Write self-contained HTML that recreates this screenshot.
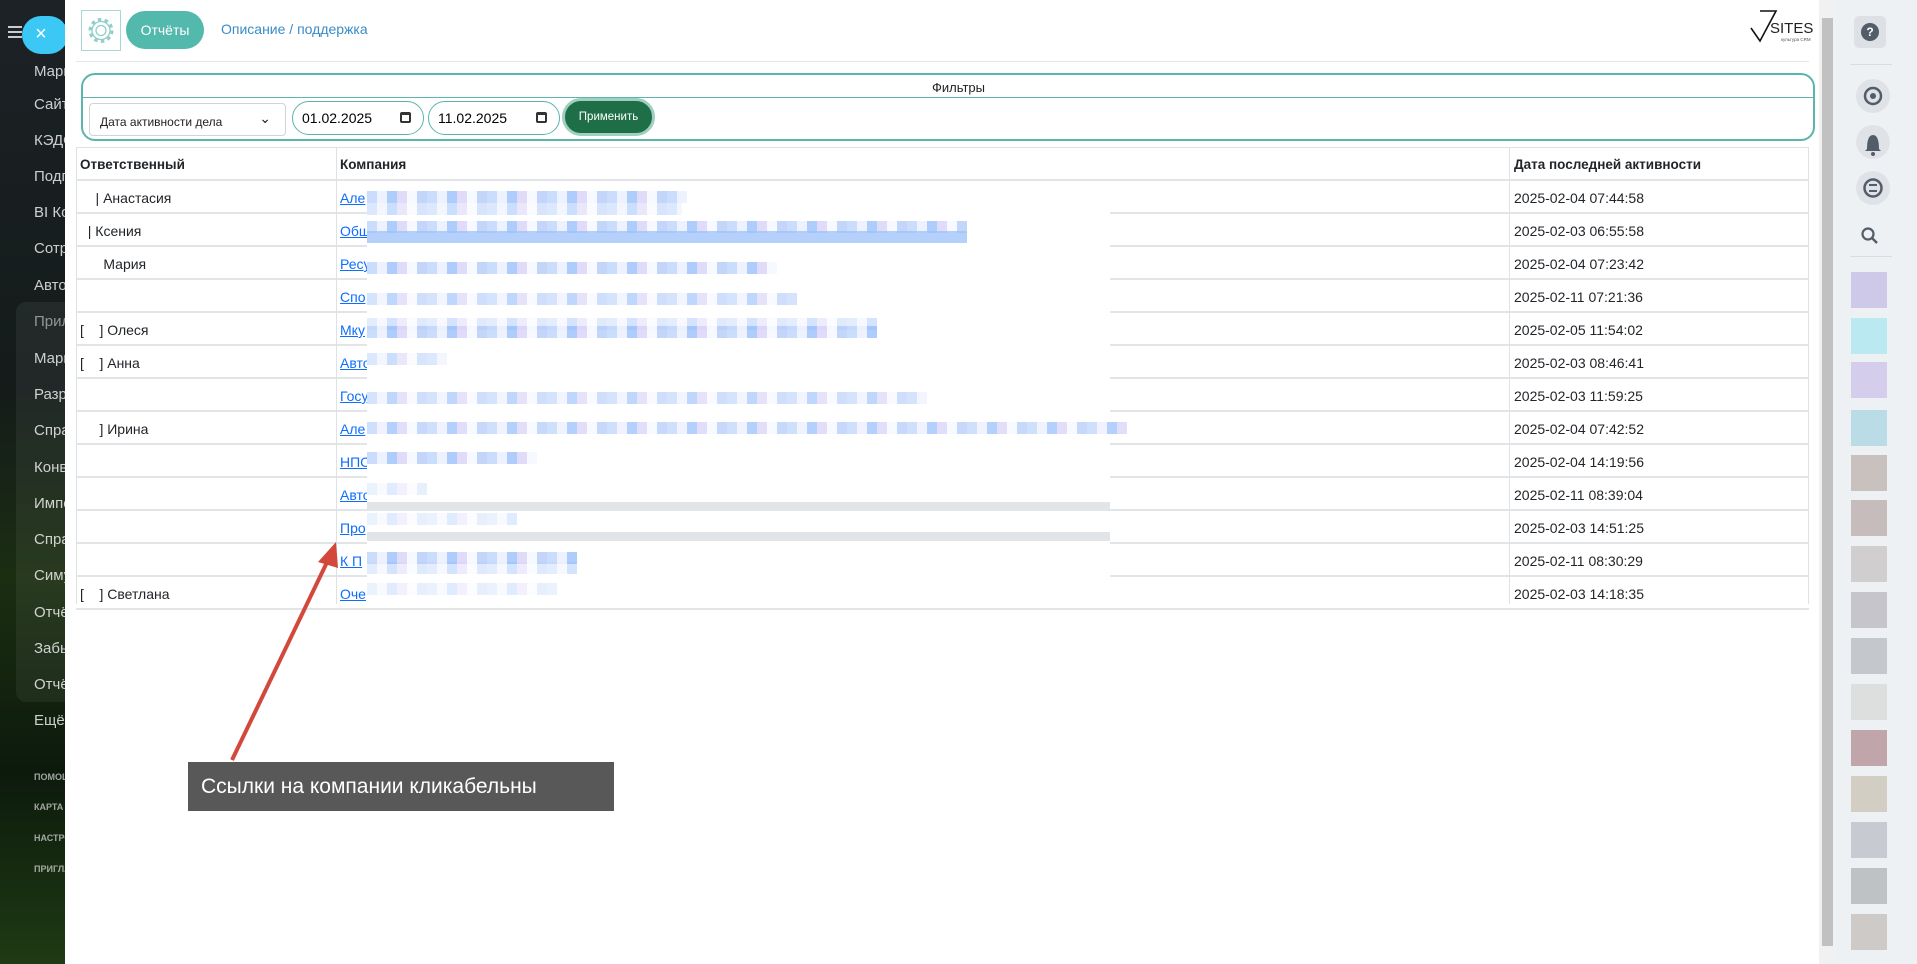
<!DOCTYPE html>
<html><head><meta charset="utf-8"><style>
*{box-sizing:border-box;margin:0;padding:0}
body{width:1917px;height:964px;overflow:hidden;position:relative;font-family:"Liberation Sans","Noto Sans CJK JP",sans-serif;background:#fff}
.sb{position:absolute;left:0;top:0;width:65px;height:964px;background:linear-gradient(180deg,#1c2226 0%,#141b1a 40%,#1b2e12 60%,#0c1a0c 80%,#1f3a14 100%);overflow:hidden}
.sb div{position:absolute;left:34px;color:rgba(255,255,255,.78);font-size:15px;white-space:nowrap}
.sb .sm{font-size:9px;font-weight:bold;color:rgba(255,255,255,.6)}
.abs{position:absolute}
.main{position:absolute;left:65px;top:0;width:1754px;height:964px;background:#fff}
.row{position:absolute;left:76px;width:1733px;height:33px;border-bottom:2px solid #e2e5e8;font-size:14px;color:#212529}
.row span{position:absolute;top:9px}
.c2{left:264px;color:#0d6efd;text-decoration:underline}
.c3{left:1438px}
.vl{position:absolute;top:148px;height:456px;width:1px;background:#dee2e6}
.blur{position:absolute;left:367px;height:12px;opacity:.75;background:repeating-linear-gradient(90deg,#b9d2fb 0 10px,#e9eefd 10px 20px,#94bcfb 20px 30px,#d6cff7 30px 40px,#f3f7ff 40px 50px,#afc9f9 50px 60px)}
.rp{position:absolute;left:1836px;top:0;width:81px;height:964px;background:#eef1f4}
.ic{position:absolute;left:1856px;width:34px;height:34px;border-radius:50%;background:#dfe3e8}
.av{position:absolute;left:1851px;width:36px;height:36px;opacity:.75}
</style></head><body>
<div class="sb">
<div style="top:63px">Маркет</div><div style="top:96px">Сайты</div><div style="top:132px">КЭДО</div><div style="top:168px">Подписка</div><div style="top:204px">BI Конструктор</div><div style="top:240px">Сотрудники</div><div style="top:277px">Автоматизация</div>
<div style="left:16px;top:302px;width:60px;height:400px;background:rgba(255,255,255,.06);border-radius:10px"></div>
<div style="top:313px;color:rgba(255,255,255,.5)">Приложения</div><div style="top:350px">Маркет</div><div style="top:386px">Разработчикам</div><div style="top:422px">Справочник</div><div style="top:459px">Конвертер</div><div style="top:495px">Импорт</div><div style="top:531px">Справка</div><div style="top:567px">Симулятор</div><div style="top:604px">Отчёты</div><div style="top:640px">Забытые</div><div style="top:676px">Отчёты</div><div style="top:712px">Ещё</div>
<div class="sm" style="top:772px">ПОМОЩЬ</div><div class="sm" style="top:802px">КАРТА</div><div class="sm" style="top:833px">НАСТРОЙКИ</div><div class="sm" style="top:864px">ПРИГЛАСИТЬ</div>
<div style="left:8px;top:26px;width:14px;height:2px;background:#ccc"></div><div style="left:8px;top:31px;width:14px;height:2px;background:#ccc"></div><div style="left:8px;top:36px;width:14px;height:2px;background:#ccc"></div>
</div>
<div class="abs" style="left:22px;top:16px;width:46px;height:38px;border-radius:19px;background:#3bc8f5;color:#fff;font-size:20px;text-align:center;line-height:36px;padding-right:8px">×</div>
<div class="main"></div>
<svg class="abs" style="left:81px;top:10px" width="40" height="41"><rect x=".5" y=".5" width="39" height="40" fill="#fff" stroke="#a8d8d3"/><circle cx="20" cy="20.5" r="5" fill="none" stroke="#8fcfc8" stroke-width="1.3"/><circle cx="20" cy="20.5" r="11" fill="none" stroke="#8fcfc8" stroke-width="3" stroke-dasharray="3.5 3.4"/><circle cx="20" cy="20.5" r="9" fill="none" stroke="#8fcfc8" stroke-width="1.3"/></svg>
<div class="abs" style="left:126px;top:11px;width:78px;height:38px;border-radius:19px;background:#54b9ad;color:#fff;font-size:14px;text-align:center;line-height:38px">Отчёты</div>
<div class="abs" style="left:221px;top:21px;color:#3a8cc7;font-size:14px">Описание / поддержка</div>
<svg class="abs" style="left:1748px;top:8px" width="66" height="38"><path d="M3 20 L12 33 L28 3 L12 3" fill="none" stroke="#111" stroke-width="1.6"/><text x="22" y="25" font-family="Liberation Sans" font-size="15" fill="#222">SITES</text><text x="33" y="33" font-family="Liberation Sans" font-size="4.5" fill="#555">культура CRM</text></svg>
<div class="abs" style="left:76px;top:61px;width:1733px;height:1px;background:#e5e7ea"></div>
<div class="abs" style="left:81px;top:73px;width:1734px;height:68px;border:2px solid #5bb5ab;border-radius:14px"></div>
<div class="abs" style="left:83px;top:97px;width:1730px;height:1px;background:#5bb5ab"></div>
<div class="abs" style="left:0;width:1917px;top:80px;text-align:center;font-size:13px;color:#222">Фильтры</div>
<div class="abs" style="left:89px;top:103px;width:197px;height:33px;border:1px solid #ced4da;border-radius:4px;font-size:12px;color:#222;padding:11px 0 0 10px">Дата активности дела<span style="position:absolute;right:14px;top:6px;font-size:14px">&#8964;</span></div>
<div class="abs" style="left:292px;top:101px;width:132px;height:34px;border:1px solid #5bb5ab;border-radius:17px;font-size:14px;padding:8px 0 0 9px">01.02.2025<span style="position:absolute;right:12px;top:10px;width:11px;height:11px;border:2px solid #333;border-top-width:3px;border-radius:2px"></span></div>
<div class="abs" style="left:428px;top:101px;width:132px;height:34px;border:1px solid #5bb5ab;border-radius:17px;font-size:14px;padding:8px 0 0 9px">11.02.2025<span style="position:absolute;right:12px;top:10px;width:11px;height:11px;border:2px solid #333;border-top-width:3px;border-radius:2px"></span></div>
<div class="abs" style="left:562px;top:98px;width:93px;height:38px;border-radius:19px;background:#1e6e47;border:3px solid #9ecfbf;color:#fff;font-size:11.5px;text-align:center;line-height:32px">Применить</div>
<div class="abs" style="left:76px;top:147px;width:1733px;height:1px;background:#dee2e6"></div>
<div class="row" style="top:148px;font-weight:bold;font-size:13.5px"><span style="left:4px">Ответственный</span><span class="c2" style="color:#212529;text-decoration:none">Компания</span><span class="c3">Дата последней активности</span></div>
<div class="row" style="top:181px"><span style="left:4px">&nbsp;&nbsp;&nbsp;&nbsp;| Анастасия</span><span class="c2">Але</span><span class="c3">2025-02-04 07:44:58</span></div>
<div class="row" style="top:214px"><span style="left:4px">&nbsp;&nbsp;| Ксения</span><span class="c2">Общ</span><span class="c3">2025-02-03 06:55:58</span></div>
<div class="row" style="top:247px"><span style="left:4px">&nbsp;&nbsp;&nbsp;&nbsp;&nbsp;&nbsp;Мария</span><span class="c2">Ресу</span><span class="c3">2025-02-04 07:23:42</span></div>
<div class="row" style="top:280px"><span class="c2">Спо</span><span class="c3">2025-02-11 07:21:36</span></div>
<div class="row" style="top:313px"><span style="left:4px">[&nbsp;&nbsp;&nbsp;&nbsp;] Олеся</span><span class="c2">Мку</span><span class="c3">2025-02-05 11:54:02</span></div>
<div class="row" style="top:346px"><span style="left:4px">[&nbsp;&nbsp;&nbsp;&nbsp;] Анна</span><span class="c2">Авто</span><span class="c3">2025-02-03 08:46:41</span></div>
<div class="row" style="top:379px"><span class="c2">Госу</span><span class="c3">2025-02-03 11:59:25</span></div>
<div class="row" style="top:412px"><span style="left:4px">&nbsp;&nbsp;&nbsp;&nbsp;&nbsp;] Ирина</span><span class="c2">Але</span><span class="c3">2025-02-04 07:42:52</span></div>
<div class="row" style="top:445px"><span class="c2">НПС</span><span class="c3">2025-02-04 14:19:56</span></div>
<div class="row" style="top:478px"><span class="c2">Авто</span><span class="c3">2025-02-11 08:39:04</span></div>
<div class="row" style="top:511px"><span class="c2">Про</span><span class="c3">2025-02-03 14:51:25</span></div>
<div class="row" style="top:544px"><span class="c2">К П</span><span class="c3">2025-02-11 08:30:29</span></div>
<div class="row" style="top:577px"><span style="left:4px">[&nbsp;&nbsp;&nbsp;&nbsp;] Светлана</span><span class="c2">Оче</span><span class="c3">2025-02-03 14:18:35</span></div>
<div class="vl" style="left:76px"></div><div class="vl" style="left:336px"></div><div class="vl" style="left:1509px"></div><div class="vl" style="left:1808px"></div>
<div class="abs" style="left:367px;top:182px;width:743px;height:421px;background:#fff"></div>
<div class="blur" style="top:191px;width:320px"></div><div class="blur" style="top:203px;width:315px;opacity:.5"></div>
<div class="blur" style="top:221px;width:600px"></div><div class="blur" style="top:231px;width:600px;background:#9cc0fa"></div>
<div class="blur" style="top:262px;width:410px"></div>
<div class="blur" style="top:293px;width:430px;opacity:.6"></div>
<div class="blur" style="top:318px;width:510px;opacity:.4"></div><div class="blur" style="top:326px;width:510px"></div>
<div class="blur" style="top:353px;width:80px;opacity:.5"></div>
<div class="blur" style="top:392px;width:560px;opacity:.6"></div>
<div class="blur" style="top:422px;width:760px;opacity:.7"></div>
<div class="blur" style="top:452px;width:170px"></div>
<div class="blur" style="top:483px;width:60px;opacity:.3"></div>
<div class="abs" style="left:367px;top:502px;width:743px;height:9px;background:#e2e5e8"></div>
<div class="blur" style="top:513px;width:150px;opacity:.3"></div>
<div class="abs" style="left:367px;top:532px;width:743px;height:9px;background:#e2e5e8"></div>
<div class="blur" style="top:552px;width:210px"></div><div class="blur" style="top:562px;width:210px;opacity:.4"></div>
<div class="blur" style="top:583px;width:190px;opacity:.3"></div>
<svg class="abs" style="left:0;top:0" width="1917" height="964"><line x1="232" y1="760" x2="330" y2="556" stroke="#d2493c" stroke-width="4"/><polygon points="336,542 318,562 338,568" fill="#d2493c"/></svg>
<div class="abs" style="left:188px;top:762px;width:426px;height:49px;background:#585858;color:#fff;font-size:21px;line-height:49px;padding-left:13px">Ссылки на компании кликабельны</div>
<div class="abs" style="left:1819px;top:0;width:17px;height:964px;background:#f1f1f1"></div>
<div class="abs" style="left:1822px;top:18px;width:11px;height:928px;background:#c1c1c1"></div>
<div class="rp"></div>
<div class="abs" style="left:1854px;top:16px;width:32px;height:32px;border-radius:5px;background:#dde0e4"></div>
<div class="abs" style="left:1861px;top:23px;width:18px;height:18px;border-radius:50%;background:#535c69;color:#fff;font-size:12px;font-weight:bold;text-align:center;line-height:18px">?</div>
<div class="abs" style="left:1850px;top:64px;width:42px;height:1px;background:#d9dde2"></div>
<div class="ic" style="top:79px"></div><div class="ic" style="top:125px"></div><div class="ic" style="top:171px"></div>
<svg class="abs" style="left:1856px;top:79px" width="34" height="126"><circle cx="17" cy="17" r="8" fill="none" stroke="#535c69" stroke-width="2.5"/><circle cx="17" cy="17" r="3" fill="#535c69"/><path d="M11 70 Q11 56 17 56 Q23 56 23 70 L25 72 L9 72 Z" fill="#535c69"/><circle cx="17" cy="75" r="2" fill="#535c69"/><circle cx="17" cy="109" r="8.5" fill="none" stroke="#535c69" stroke-width="2.5"/><path d="M13 106 H21 M13 112 H21" stroke="#535c69" stroke-width="2"/></svg>
<svg class="abs" style="left:1860px;top:226px" width="20" height="20"><circle cx="8" cy="8" r="5.5" fill="none" stroke="#535c69" stroke-width="2.2"/><line x1="12" y1="12" x2="17" y2="17" stroke="#535c69" stroke-width="2.4"/></svg>
<div class="abs" style="left:1850px;top:256px;width:42px;height:1px;background:#d9dde2"></div>
<div class="av" style="top:272px;background:#c4bbe6"></div>
<div class="av" style="top:318px;background:#a9e6f0"></div>
<div class="av" style="top:362px;background:#cbc2ea"></div>
<div class="av" style="top:410px;background:#a8d4e3"></div>
<div class="av" style="top:455px;background:#bcb0ab"></div>
<div class="av" style="top:500px;background:#b8a9aa"></div>
<div class="av" style="top:546px;background:#c7c2c4"></div>
<div class="av" style="top:592px;background:#b7b5bd"></div>
<div class="av" style="top:638px;background:#b5b9c0"></div>
<div class="av" style="top:684px;background:#d7d7d7"></div>
<div class="av" style="top:730px;background:#b08c92"></div>
<div class="av" style="top:776px;background:#c9c2b3"></div>
<div class="av" style="top:822px;background:#b9bcc5"></div>
<div class="av" style="top:868px;background:#aeb2b6"></div>
<div class="av" style="top:914px;background:#c2bcba"></div>
</body></html>
